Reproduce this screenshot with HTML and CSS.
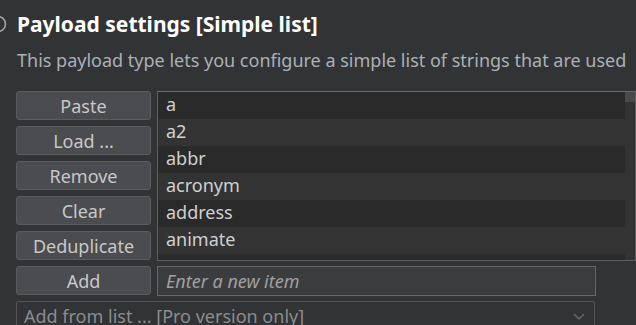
FILE: index.html
```html
<!DOCTYPE html>
<html lang="en">
<head>
    <meta charset="UTF-8">
    <title>Payload settings</title>
    <link rel="stylesheet" href="styles.css">
</head>
<body>
<div class="panel">
    <div class="title-row">
        <svg class="help" width="18" height="18" viewBox="0 0 18 18">
            <circle cx="9" cy="9" r="7.5" fill="none" stroke="#a8a8a8" stroke-width="1.6"/>
        </svg>
        <h1>Payload settings [Simple list]</h1>
    </div>
    <p class="desc">This payload type lets you configure a simple list of strings that are used</p>

    <div class="editor">
        <div class="buttons">
            <button class="btn">Paste</button>
            <button class="btn">Load ...</button>
            <button class="btn">Remove</button>
            <button class="btn">Clear</button>
            <button class="btn">Deduplicate</button>
        </div>
        <div class="list">
            <ul class="items">
                <li>a</li>
                <li>a2</li>
                <li>abbr</li>
                <li>acronym</li>
                <li>address</li>
                <li>animate</li>
                <li></li>
            </ul>
            <div class="scrollbar"><div class="thumb"></div></div>
        </div>
    </div>

    <div class="add-row">
        <button class="btn">Add</button>
        <input class="new-item" type="text" placeholder="Enter a new item">
    </div>

    <div class="select">
        <span>Add from list ... [Pro version only]</span>
        <svg class="chevron" width="12" height="7" viewBox="0 0 12 7">
            <path d="M1 1 L6 6 L11 1" fill="none" stroke="#6a6a6a" stroke-width="1.4"/>
        </svg>
    </div>
</div>
</body>
</html>
```

FILE: styles.css
```css
body {
    margin: 0;
    background: #323335;
    font-family: 'Noto Sans', sans-serif;
    color: #c8c8c8;
    overflow: hidden;
}

.panel {
    padding: 9px 0 0 16px;
    width: 620px;
}

.title-row {
    display: flex;
    align-items: center;
    margin-left: -27px;
    height: 30px;
}

.help {
    margin-right: 10px;
}

h1 {
    margin: 0;
    font-size: 21px;
    font-weight: bold;
    color: #ffffff;
    white-space: nowrap;
}

.desc {
    margin: 8px 0 0 1px;
    font-size: 18px;
    line-height: 26px;
    color: #aab0b8;
    white-space: nowrap;
}

.editor {
    display: flex;
    gap: 6px;
    margin-top: 18px;
}

.buttons {
    display: flex;
    flex-direction: column;
    gap: 6px;
}

.btn {
    width: 135px;
    height: 29px;
    padding: 0;
    background: #4a4c4f;
    border: 1px solid #5a5c5f;
    border-radius: 3px;
    color: #c8c8c8;
    font-family: 'Noto Sans', sans-serif;
    font-size: 18px;
    line-height: 26px;
}

.list {
    display: flex;
    width: 478px;
    height: 168px;
    border: 1px solid #5f5f5f;
    border-top-color: #6a6a6a;
    overflow: hidden;
}

.items {
    flex: 1;
    list-style: none;
    margin: 0;
    padding: 0;
}

.items li {
    height: 27px;
    padding-left: 8px;
    font-size: 18px;
    line-height: 24px;
    color: #d0d0d0;
    background: #2a2a2a;
}

.items li:nth-child(even) {
    background: #333333;
}

.scrollbar {
    width: 10px;
    background: #333333;
}

.thumb {
    height: 10px;
    background: #4a4a4a;
}

.add-row {
    display: flex;
    gap: 6px;
    margin-top: 5px;
}

.new-item {
    box-sizing: border-box;
    width: 439px;
    height: 30px;
    margin: 0;
    padding: 0 8px;
    background: #3b3c3e;
    border: 1px solid #666666;
    color: #d0d0d0;
    font-family: 'Noto Sans', sans-serif;
    font-size: 18px;
    line-height: 26px;
    outline: none;
}

.new-item::placeholder {
    color: #a0a0a0;
    font-style: italic;
}

.select {
    display: flex;
    align-items: center;
    justify-content: space-between;
    box-sizing: border-box;
    width: 579px;
    height: 30px;
    margin-top: 5px;
    padding: 0 9px 0 7px;
    border: 1px solid #555555;
    border-radius: 2px;
    font-size: 18px;
    color: #8a8c90;
    white-space: nowrap;
}
```
